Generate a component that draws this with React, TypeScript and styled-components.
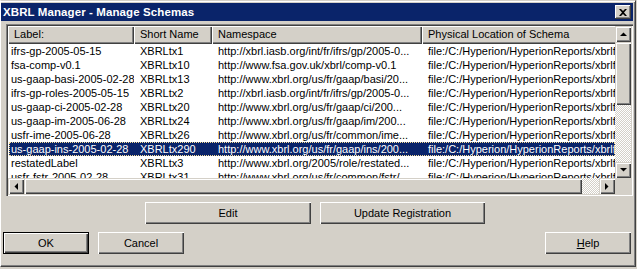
import React from "react";
import styled, { createGlobalStyle } from "styled-components";

const Global = createGlobalStyle`
  html, body { margin: 0; padding: 0; background: #D4D0C8; }
  body { font-family: "Liberation Sans", Arial, sans-serif; font-size: 11px; color: #000; }
  * { box-sizing: border-box; }
`;

const Window = styled.div`
  width: 636px;
  height: 267px;
  background: #d4d0c8;
  border-top: 1px solid #d4d0c8;
  border-left: 1px solid #ffffff;
  border-right: 1px solid #404040;
  border-bottom: 1px solid #404040;
  box-shadow: inset 0 1px #ffffff, inset -1px -1px #808080;
  padding: 2px 2px 0 0;
  display: flex;
  flex-direction: column;
`;

const TitleBar = styled.div`
  height: 18px;
  background: #0a246a;
  display: flex;
  align-items: center;
  padding-left: 2px;
  color: #ffffff;
  font-weight: bold;
  font-size: 11.5px;
  letter-spacing: 0.1px;
`;

const TitleText = styled.span`
  flex: 1;
`;

const CloseButton = styled.div`
  width: 16px;
  height: 14px;
  margin-right: 2px;
  background: #d4d0c8;
  box-shadow: inset -1px -1px #404040, inset 1px 1px #ffffff, inset -2px -2px #808080;
  display: flex;
  align-items: center;
  justify-content: center;
`;

const ListView = styled.div`
  width: 627px;
  height: 172px;
  margin: 3px 0 0 5px;
  padding: 2px;
  box-shadow: inset 1px 1px #808080, inset 2px 2px #404040, inset -1px -1px #ffffff, inset -2px -2px #d4d0c8;
  display: grid;
  grid-template-columns: 1fr 16px;
  grid-template-rows: 1fr 16px;
`;

const Viewport = styled.div`
  background: #ffffff;
  overflow: hidden;
`;

const HeaderRow = styled.div`
  display: flex;
  height: 18px;
  background: #d4d0c8;
`;

const HeaderCell = styled.div<{ $w: number }>`
  flex: 0 0 ${(p) => p.$w}px;
  height: 18px;
  line-height: 17px;
  padding-left: 6px;
  white-space: nowrap;
  overflow: hidden;
  box-shadow: inset 1px 1px #ffffff, inset -1px -1px #404040, inset -2px -2px #808080;
`;

const Row = styled.div<{ $sel?: boolean }>`
  display: flex;
  height: 14px;
  line-height: 14px;
  width: 606px;
  margin-left: 1px;
  background: ${(p) => (p.$sel ? "#0a246a" : "transparent")};
  color: ${(p) => (p.$sel ? "#ffffff" : "#000000")};
  outline: ${(p) => (p.$sel ? "1px dotted #f5db95" : "none")};
  outline-offset: -1px;
`;

const Cell = styled.div<{ $w: number; $first?: boolean }>`
  flex: 0 0 ${(p) => p.$w}px;
  padding-left: ${(p) => (p.$first ? 2 : 6)}px;
  white-space: nowrap;
  overflow: hidden;
`;

const VScroll = styled.div`
  display: flex;
  flex-direction: column;
`;

const HScroll = styled.div`
  display: flex;
`;

const ArrowButton = styled.div`
  flex: 0 0 16px;
  width: 16px;
  height: 16px;
  background: #d4d0c8;
  box-shadow: inset 1px 1px #d4d0c8, inset 2px 2px #ffffff, inset -1px -1px #404040, inset -2px -2px #808080;
  display: flex;
  align-items: center;
  justify-content: center;
`;

const Thumb = styled.div<{ $size: number }>`
  flex: 0 0 ${(p) => p.$size}px;
  background: #d4d0c8;
  box-shadow: inset 1px 1px #d4d0c8, inset 2px 2px #ffffff, inset -1px -1px #404040, inset -2px -2px #808080;
`;

const Track = styled.div`
  flex: 1;
  background-color: #ffffff;
  background-image: conic-gradient(#d4d0c8 0 25%, #ffffff 0 50%, #d4d0c8 0 75%, #ffffff 0);
  background-size: 2px 2px;
`;

const Corner = styled.div`
  background: #d4d0c8;
`;

const ButtonRow = styled.div<{ $top: number; $left: number }>`
  display: flex;
  gap: 9px;
  margin-top: ${(p) => p.$top}px;
  padding-left: ${(p) => p.$left}px;
  padding-right: 2px;
`;

const PushButton = styled.div<{ $w: number; $default?: boolean; $right?: boolean }>`
  width: ${(p) => p.$w}px;
  height: 22px;
  background: #d4d0c8;
  display: flex;
  align-items: center;
  justify-content: center;
  margin-left: ${(p) => (p.$right ? "auto" : "0")};
  border: ${(p) => (p.$default ? "1px solid #000000" : "none")};
  box-shadow: inset 1px 1px #ffffff, inset -1px -1px #404040, inset -2px -2px #808080;
`;

const Mnemonic = styled.span`
  text-decoration: underline;
`;

const cols = [125, 78, 210, 200];

const path = "file:/C:/Hyperion/HyperionReports/xbrlf";

const rows: [string, string, string, string][] = [
  ["ifrs-gp-2005-05-15", "XBRLtx1", "http://xbrl.iasb.org/int/fr/ifrs/gp/2005-0...", path],
  ["fsa-comp-v0.1", "XBRLtx10", "http://www.fsa.gov.uk/xbrl/comp-v0.1", path],
  ["us-gaap-basi-2005-02-28", "XBRLtx13", "http://www.xbrl.org/us/fr/gaap/basi/20...", path],
  ["ifrs-gp-roles-2005-05-15", "XBRLtx2", "http://xbrl.iasb.org/int/fr/ifrs/gp/2005-0...", path],
  ["us-gaap-ci-2005-02-28", "XBRLtx20", "http://www.xbrl.org/us/fr/gaap/ci/200...", path],
  ["us-gaap-im-2005-06-28", "XBRLtx24", "http://www.xbrl.org/us/fr/gaap/im/200...", path],
  ["usfr-ime-2005-06-28", "XBRLtx26", "http://www.xbrl.org/us/fr/common/ime...", path],
  ["us-gaap-ins-2005-02-28", "XBRLtx290", "http://www.xbrl.org/us/fr/gaap/ins/200...", path],
  ["restatedLabel", "XBRLtx3", "http://www.xbrl.org/2005/role/restated...", path],
  ["usfr-fstr-2005-02-28", "XBRLtx31", "http://www.xbrl.org/us/fr/common/fstr/...", path],
];

const Tri = ({ dir }: { dir: "up" | "down" | "left" | "right" }) => {
  const pts: Record<string, string> = {
    up: "0,4 7,4 3.5,0.5",
    down: "0,0 7,0 3.5,3.5",
    left: "4,0 4,7 0.5,3.5",
    right: "0,0 0,7 3.5,3.5",
  };
  const horiz = dir === "left" || dir === "right";
  return (
    <svg width={horiz ? 4 : 7} height={horiz ? 7 : 4} viewBox={horiz ? "0 0 4 7" : "0 0 7 4"}>
      <polygon points={pts[dir]} fill="#000" />
    </svg>
  );
};

export default function App() {
  return (
    <>
      <Global />
      <Window>
        <TitleBar>
          <TitleText>XBRL Manager - Manage Schemas</TitleText>
          <CloseButton>
            <svg width="8" height="7" viewBox="0 0 8 7">
              <path d="M0 0h2l2 2 2-2h2L5 3.5 8 7H6L4 5 2 7H0l3-3.5z" fill="#000" />
            </svg>
          </CloseButton>
        </TitleBar>
        <ListView>
          <Viewport>
            <HeaderRow>
              <HeaderCell $w={cols[0] + 1}>Label:</HeaderCell>
              <HeaderCell $w={cols[1]}>Short Name</HeaderCell>
              <HeaderCell $w={cols[2]}>Namespace</HeaderCell>
              <HeaderCell $w={cols[3]}>Physical Location of Schema</HeaderCell>
            </HeaderRow>
            {rows.map((r, i) => (
              <Row key={i} $sel={i === 7}>
                <Cell $w={cols[0]} $first>{r[0]}</Cell>
                <Cell $w={cols[1]}>{r[1]}</Cell>
                <Cell $w={cols[2]}>{r[2]}</Cell>
                <Cell $w={cols[3]}>{r[3]}</Cell>
              </Row>
            ))}
          </Viewport>
          <VScroll>
            <ArrowButton><Tri dir="up" /></ArrowButton>
            <Thumb $size={63} />
            <Track />
            <ArrowButton><Tri dir="down" /></ArrowButton>
          </VScroll>
          <HScroll>
            <ArrowButton><Tri dir="left" /></ArrowButton>
            <Thumb $size={558} />
            <Track />
            <ArrowButton><Tri dir="right" /></ArrowButton>
          </HScroll>
          <Corner />
        </ListView>
        <ButtonRow $top={6} $left={144}>
          <PushButton $w={166}>Edit</PushButton>
          <PushButton $w={165}>Update Registration</PushButton>
        </ButtonRow>
        <ButtonRow $top={8} $left={2}>
          <PushButton $w={86} $default>OK</PushButton>
          <PushButton $w={86}>Cancel</PushButton>
          <PushButton $w={86} $right><span><Mnemonic>H</Mnemonic>elp</span></PushButton>
        </ButtonRow>
      </Window>
    </>
  );
}
